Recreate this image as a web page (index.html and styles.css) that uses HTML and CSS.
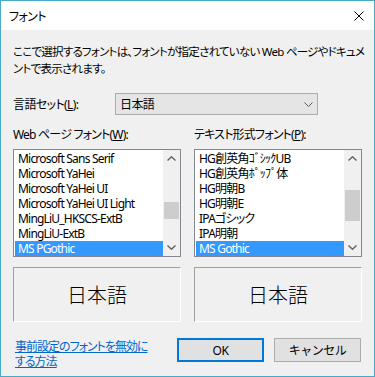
FILE: index.html
```html
<!DOCTYPE html>
<html lang="ja">
<head>
    <meta charset="UTF-8">
    <meta name="viewport" content="width=device-width, initial-scale=1.0">
    <title>フォント</title>
    <link rel="stylesheet" href="styles.css">
</head>
<body>

<div class="window">
    <div class="titlebar">
        <span class="title">フォント</span>
        <svg class="close" width="10" height="10" viewBox="0 0 10 10">
            <path d="M0.5 0.5 L9.5 9.5 M9.5 0.5 L0.5 9.5" stroke="#000" stroke-width="1" fill="none"/>
        </svg>
    </div>

    <div class="dialog-body">
        <p class="intro">ここで選択するフォントは、フォントが指定されていない Web ページやドキュメ<br>ントで表示されます。</p>

        <div class="lang-row">
            <span class="lang-label">言語セット(<u>L</u>):</span>
            <div class="select">
                <span>日本語</span>
                <svg class="select-arrow" width="9" height="5" viewBox="0 0 9 5">
                    <polyline points="0.5,0.5 4.5,4.5 8.5,0.5" stroke="#555" stroke-width="1" fill="none"/>
                </svg>
            </div>
        </div>

        <div class="columns">
            <!-- Web page font -->
            <div class="col">
                <div class="col-label">Web ページ フォント(<u>W</u>):</div>
                <div class="listbox">
                    <ul class="items">
                        <li>Microsoft Sans Serif</li>
                        <li>Microsoft YaHei</li>
                        <li>Microsoft YaHei UI</li>
                        <li>Microsoft YaHei UI Light</li>
                        <li>MingLiU_HKSCS-ExtB</li>
                        <li>MingLiU-ExtB</li>
                        <li class="selected">MS PGothic</li>
                    </ul>
                    <div class="scrollbar">
                        <div class="sb-btn">
                            <svg width="9" height="5" viewBox="0 0 9 5"><polyline points="0.5,4.5 4.5,0.8 8.5,4.5" stroke="#606060" stroke-width="1.4" fill="none"/></svg>
                        </div>
                        <div class="sb-track">
                            <div class="thumb thumb-web"></div>
                        </div>
                        <div class="sb-btn">
                            <svg width="9" height="5" viewBox="0 0 9 5"><polyline points="0.5,0.5 4.5,4.2 8.5,0.5" stroke="#606060" stroke-width="1.4" fill="none"/></svg>
                        </div>
                    </div>
                </div>
                <div class="preview">日本語</div>
            </div>

            <!-- Plain text font -->
            <div class="col">
                <div class="col-label">テキスト形式フォント(<u>P</u>):</div>
                <div class="listbox">
                    <ul class="items">
                        <li>HG創英角ｺﾞｼｯｸUB</li>
                        <li>HG創英角ﾎﾟｯﾌﾟ体</li>
                        <li>HG明朝B</li>
                        <li>HG明朝E</li>
                        <li>IPAゴシック</li>
                        <li>IPA明朝</li>
                        <li class="selected">MS Gothic</li>
                    </ul>
                    <div class="scrollbar">
                        <div class="sb-btn">
                            <svg width="9" height="5" viewBox="0 0 9 5"><polyline points="0.5,4.5 4.5,0.8 8.5,4.5" stroke="#606060" stroke-width="1.4" fill="none"/></svg>
                        </div>
                        <div class="sb-track">
                            <div class="thumb thumb-text"></div>
                        </div>
                        <div class="sb-btn">
                            <svg width="9" height="5" viewBox="0 0 9 5"><polyline points="0.5,0.5 4.5,4.2 8.5,0.5" stroke="#606060" stroke-width="1.4" fill="none"/></svg>
                        </div>
                    </div>
                </div>
                <div class="preview">日本語</div>
            </div>
        </div>

        <div class="footer">
            <a class="help-link" href="#"><span>事前設定のフォントを無効に</span><span>する方法</span></a>
            <div class="buttons">
                <button class="btn btn-default">OK</button>
                <button class="btn">キャンセル</button>
            </div>
        </div>
    </div>
</div>

</body>
</html>
```

FILE: styles.css
```css
:root {
    --window-border: #47a9c9;
    --face: #f0f0f0;
    --list-border: #828790;
    --highlight: #3399ff;
    --link: #0066cc;
}

* {
    margin: 0;
    padding: 0;
    box-sizing: border-box;
}

body {
    font-family: "Noto Sans", "Noto Sans CJK JP", sans-serif;
    font-size: 12px;
    color: #000;
    background: #fff;
}

.window {
    width: 375px;
    height: 377px;
    border: 1px solid var(--window-border);
    background: var(--face);
    font-feature-settings: "palt";
    letter-spacing: -0.6px;
    overflow: hidden;
}

/* Title bar */
.titlebar {
    height: 29px;
    background: #fff;
    display: flex;
    align-items: center;
    justify-content: space-between;
    padding: 0 10px 0 8px;
}

.title {
    font-size: 12px;
}

.close {
    display: block;
}

/* Content */
.dialog-body {
    padding: 13px 12px 0 12px;
}

.intro {
    font-size: 11.5px;
    line-height: 17px;
    white-space: nowrap;
    letter-spacing: -0.75px;
}

.lang-row {
    display: flex;
    align-items: center;
    margin-top: 16px;
}

.lang-label {
    width: 102px;
}

.select {
    width: 203px;
    height: 22px;
    background: #e5e5e5;
    border: 1px solid #acacac;
    display: flex;
    align-items: center;
    justify-content: space-between;
    padding: 0 4px 0 4px;
}

.select-arrow {
    display: block;
}

.columns {
    display: grid;
    grid-template-columns: 168px 168px;
    gap: 13px;
    margin-top: 11px;
}

.col-label {
    line-height: 17px;
    height: 17px;
    margin-bottom: 6px;
    letter-spacing: -0.8px;
}

.listbox {
    height: 108px;
    border: 1px solid var(--list-border);
    background: #fff;
    display: flex;
}

.items {
    flex: 1;
    list-style: none;
    padding: 1px 0 0 1px;
    overflow: hidden;
    letter-spacing: -0.8px;
}

.items li {
    height: 15px;
    line-height: 15px;
    padding-left: 3px;
    white-space: nowrap;
    overflow: hidden;
}

.items li.selected {
    background: var(--highlight);
    color: #fff;
}

.scrollbar {
    width: 17px;
    background: var(--face);
    display: flex;
    flex-direction: column;
}

.sb-btn {
    height: 17px;
    display: flex;
    align-items: center;
    justify-content: center;
}

.sb-btn svg {
    display: block;
}

.sb-track {
    flex: 1;
    padding: 0 1px;
}

.thumb {
    background: #cdcdcd;
}

.thumb-web {
    margin-top: 35px;
    height: 17px;
}

.thumb-text {
    margin-top: 23px;
    height: 31px;
}

.preview {
    margin-top: 10px;
    height: 55px;
    border-top: 1px solid #a0a0a0;
    border-left: 1px solid #a0a0a0;
    border-right: 1px solid #fff;
    border-bottom: 1px solid #fff;
    display: flex;
    align-items: center;
    justify-content: center;
    font-family: "Noto Sans CJK JP", sans-serif;
    font-weight: 300;
    font-size: 20px;
    letter-spacing: 0;
}

/* Footer */
.footer {
    display: flex;
    justify-content: space-between;
    align-items: flex-start;
    margin-top: 16px;
    padding-right: 1px;
}

.help-link {
    color: var(--link);
    margin-left: 2px;
    margin-top: 1px;
    letter-spacing: -1px;
}

.help-link span {
    display: block;
    height: 15px;
    line-height: 15px;
    overflow: hidden;
}

.buttons {
    display: flex;
    gap: 10px;
}

.btn {
    width: 87px;
    height: 24px;
    background: #e1e1e1;
    border: 1px solid #adadad;
    font-family: "Noto Sans", "Noto Sans CJK JP", sans-serif;
    font-size: 12px;
    letter-spacing: -0.5px;
    color: #000;
}

.btn-default {
    border: 2px solid #0078d7;
}
```
